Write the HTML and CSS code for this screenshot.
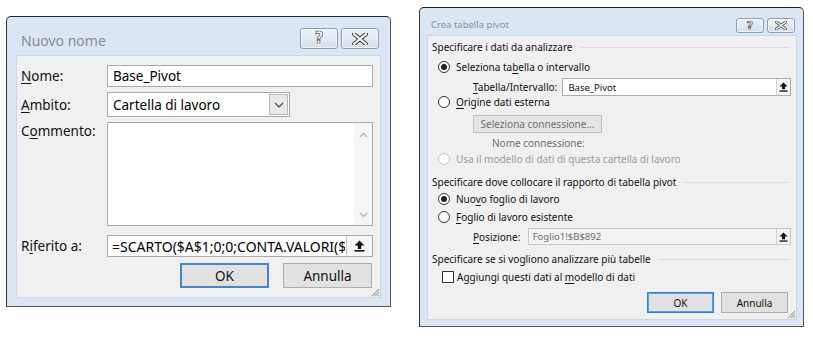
FILE: index.html
```html
<!DOCTYPE html>
<html>
<head>
<meta charset="utf-8">
<link rel="stylesheet" href="styles.css">
</head>
<body>
<div class="page">
  <div class="win win-a">
    <div class="titlebar tb-a">
      <span class="title title-a">Nuovo nome</span>
      <div class="tbtns">
        <span class="tbtn tbtn-a"><span class="qmark qmark-a">?</span></span>
        <span class="tbtn tbtn-a">
          <svg width="16" height="12" viewBox="0 0 16 12"><path d="M2 1 L14 11 M14 1 L2 11" stroke="#444" stroke-width="4.2" stroke-linecap="square"/><path d="M2 1 L14 11 M14 1 L2 11" stroke="#fff" stroke-width="2" stroke-linecap="square"/></svg>
        </span>
      </div>
    </div>
    <div class="client client-a">
      <div class="arow arow-nome">
        <span class="alabel"><u>N</u>ome:</span>
        <div class="abox abox-full">Base_Pivot</div>
      </div>
      <div class="arow arow-ambito">
        <span class="alabel"><u>A</u>mbito:</span>
        <div class="abox combo">
          <span class="combo-text">Cartella di lavoro</span>
          <span class="combo-btn"><svg width="10" height="6" viewBox="0 0 10 6"><path d="M1 1 L5 5 L9 1" fill="none" stroke="#444" stroke-width="1.2"/></svg></span>
        </div>
      </div>
      <div class="arow arow-comm">
        <span class="alabel alabel-top">C<u>o</u>mmento:</span>
        <div class="abox memo">
          <div class="memo-text"></div>
          <div class="memo-scroll">
            <svg width="9" height="6" viewBox="0 0 9 6"><path d="M1 5 L4.5 1.5 L8 5" fill="none" stroke="#b4b4b4" stroke-width="1.3"/></svg>
            <svg width="9" height="6" viewBox="0 0 9 6"><path d="M1 1 L4.5 4.5 L8 1" fill="none" stroke="#b4b4b4" stroke-width="1.3"/></svg>
          </div>
        </div>
      </div>
      <div class="arow arow-rif">
        <span class="alabel">R<u>i</u>ferito a:</span>
        <div class="abox abox-full refbox">
          <span class="ref-text">=SCARTO($A$1;0;0;CONTA.VALORI($A</span>
          <span class="ref-btn ref-btn-a"><svg width="11" height="12" viewBox="0 0 11 12"><path d="M5.5 0.5 L10.5 5.5 L7.2 5.5 L7.2 9 L3.8 9 L3.8 5.5 L0.5 5.5 Z" fill="#111"/><rect x="0.5" y="10" width="10" height="1.6" fill="#111"/></svg></span>
        </div>
      </div>
      <div class="arow arow-btns">
        <span class="abtn abtn-def">OK</span>
        <span class="abtn">Annulla</span>
      </div>
      <svg class="grip" width="10" height="10" viewBox="0 0 10 10"><path d="M9 2 L2 9 M9 5 L5 9 M9 8 L8 9" stroke="#a8a8a8" stroke-width="1.2"/></svg>
    </div>
  </div>

  <div class="win win-b">
    <div class="titlebar tb-b">
      <span class="title title-b">Crea tabella pivot</span>
      <div class="tbtns tbtns-b">
        <span class="tbtn tbtn-b"><span class="qmark qmark-b">?</span></span>
        <span class="tbtn tbtn-b">
          <svg width="12" height="9" viewBox="0 0 12 9"><path d="M1.5 1 L10.5 8 M10.5 1 L1.5 8" stroke="#555" stroke-width="3" stroke-linecap="square"/><path d="M1.5 1 L10.5 8 M10.5 1 L1.5 8" stroke="#fff" stroke-width="1.3" stroke-linecap="square"/></svg>
        </span>
      </div>
    </div>
    <div class="client client-b">
      <div class="brow head h1"><span>Specificare i dati da analizzare</span><span class="rule"></span></div>
      <div class="brow opt r1"><span class="radio on"></span><span>Seleziona ta<u>b</u>ella o intervallo</span></div>
      <div class="brow sub tab">
        <span class="blabel blabel-tab"><u>T</u>abella/Intervallo:</span>
        <div class="bbox bbox-tab"><span class="bbox-text">Base_Pivot</span><span class="ref-btn ref-btn-b"><svg width="9" height="10" viewBox="0 0 9 10"><path d="M4.5 0.5 L8.5 4.5 L6 4.5 L6 7.3 L3 7.3 L3 4.5 L0.5 4.5 Z" fill="#111"/><rect x="0.5" y="8.4" width="8" height="1.3" fill="#111"/></svg></span></div>
      </div>
      <div class="brow opt r2"><span class="radio"></span><span><u>O</u>rigine dati esterna</span></div>
      <div class="brow sub btnrow"><span class="conn-btn">Seleziona connessione...</span></div>
      <div class="brow nomeconn">Nome connessione:</div>
      <div class="brow opt r3 dis"><span class="radio radio-dis"></span><span>Usa il modello di dati di questa cartella di lavoro</span></div>
      <div class="brow head h2"><span>Specificare dove collocare il rapporto di tabella pivot</span><span class="rule"></span></div>
      <div class="brow opt r4"><span class="radio on"></span><span>Nuo<u>v</u>o foglio di lavoro</span></div>
      <div class="brow opt r5"><span class="radio"></span><span><u>F</u>oglio di lavoro esistente</span></div>
      <div class="brow sub pos">
        <span class="blabel blabel-pos"><u>P</u>osizione:</span>
        <div class="bbox bbox-pos"><span class="bbox-text">Foglio1!$B$892</span><span class="ref-btn ref-btn-b"><svg width="9" height="10" viewBox="0 0 9 10"><path d="M4.5 0.5 L8.5 4.5 L6 4.5 L6 7.3 L3 7.3 L3 4.5 L0.5 4.5 Z" fill="#111"/><rect x="0.5" y="8.4" width="8" height="1.3" fill="#111"/></svg></span></div>
      </div>
      <div class="brow head h3"><span>Specificare se si vogliono analizzare più tabelle</span><span class="rule"></span></div>
      <div class="brow chk"><span class="checkbox"></span><span>Aggiungi questi dati al <u>m</u>odello di dati</span></div>
      <div class="brow bbtns">
        <span class="bbtn bbtn-def">OK</span>
        <span class="bbtn">Annulla</span>
      </div>
      <svg class="grip grip-b" width="10" height="10" viewBox="0 0 10 10"><path d="M9 2 L2 9 M9 5 L5 9 M9 8 L8 9" stroke="#a8a8a8" stroke-width="1.2"/></svg>
    </div>
  </div>
</div>
</body>
</html>
```

FILE: styles.css
```css
* { box-sizing: border-box; }
html, body { margin: 0; padding: 0; background: #fff; }
body { font-family: "Noto Sans", "Open Sans", sans-serif; color: #000; }
u { text-decoration-thickness: 1px; text-underline-offset: 2px; }

.page { display: flex; align-items: flex-start; padding-left: 6px; width: 813px; height: 339px; }

.win {
  width: 385px;
  background: #dbe6f4;
  border: 1px solid #555;
  border-top-color: #222;
  border-left-color: #333;
  border-radius: 5px 5px 0 0;
  display: flex;
  flex-direction: column;
}
.win-a { margin-top: 16px; height: 291px; padding: 0 9px 8px 9px; }
.win-b { margin-top: 7px; margin-left: 28px; height: 320px; padding: 0 6px 6px 7px; }

.titlebar { display: flex; align-items: center; justify-content: space-between; }
.tb-a { height: 38px; padding: 0 2px 0 5px; }
.tb-b { height: 27px; padding: 0 2px 0 4px; }
.title { color: #8c8c8c; }
.title-a { font-size: 14px; margin-top: 8px; }
.title-b { font-size: 9.5px; margin-top: 5px; color: #8e8e8e; }

.tbtns { display: flex; gap: 3px; }
.tbtns-b { gap: 3px; margin-top: 8px; }
.tbtn {
  display: flex; align-items: center; justify-content: center;
  border: 1px solid #8d9db3;
  border-radius: 3px;
  background: linear-gradient(#edf2f9, #d4dfec);
  box-shadow: inset 0 0 0 1px rgba(255,255,255,0.6);
}
.tbtn-a { width: 38px; height: 21px; margin-top: 5px; }
.tbtn-b { width: 28px; height: 15px; }
.qmark { font-family: "DejaVu Sans", sans-serif; font-weight: bold; color: #fff; -webkit-text-stroke: 0.7px #555; line-height: 1; }
.qmark-a { font-size: 15px; }
.qmark-b { font-size: 11px; }

.client {
  background: #f0f0f0;
  border: 1px solid #cdd7e3;
  flex: 1;
  position: relative;
  display: flex;
  flex-direction: column;
}

/* left dialog */
.client-a { padding: 9px 0 0 4px; font-size: 13.5px; }
.arow { display: flex; align-items: center; }
.alabel { width: 86px; color: #111; }
.alabel-top { align-self: flex-start; margin-top: 0; }
.abox { background: #fff; border: 1px solid #a9a9a9; height: 22px; display: flex; align-items: center; padding-left: 5px; color: #000; }
.abox-full { width: 266px; }
.arow-ambito { margin-top: 5px; }
.combo { width: 183px; height: 25px; padding-left: 5px; justify-content: space-between; padding-right: 1px; }
.combo-btn { width: 19px; height: 21px; border: 1px solid #b9b9b9; background: #e8e8e8; display: flex; align-items: center; justify-content: center; }
.arow-comm { margin-top: 5px; }
.memo { width: 266px; height: 104px; padding: 0; align-items: stretch; }
.memo-text { flex: 1; }
.memo-scroll { width: 18px; background: #f6f6f6; display: flex; flex-direction: column; justify-content: space-between; align-items: center; padding: 9px 0 7px; }
.arow-rif { margin-top: 9px; }
.refbox { padding-left: 4px; padding-right: 0; overflow: hidden; justify-content: space-between; }
.ref-text { white-space: nowrap; overflow: hidden; width: 233px; font-size: 14px; }
.ref-btn { display: flex; align-items: center; justify-content: center; background: #f7f7f7; border-left: 1px solid #c8c8c8; }
.ref-btn-a { width: 26px; height: 20px; }
.arow-btns { margin-top: 6px; padding-left: 159px; gap: 14px; }
.abtn { width: 89px; height: 25px; border: 1px solid #adadad; background: #e1e1e1; display: flex; align-items: center; justify-content: center; color: #111; }
.abtn-def { border: 2px solid #3c87d6; }
.grip { position: absolute; right: 0; bottom: 0; }

/* right dialog */
.client-b { padding: 2px 5px 0 0; font-size: 10px; color: #111; }
.brow { display: flex; align-items: center; white-space: nowrap; }
.head { height: 18px; padding-left: 4px; }
.rule { flex: 1; height: 1px; background: #dcdcdc; margin-left: 8px; margin-right: 2px; }
.opt { height: 16px; padding-left: 10px; gap: 6px; }
.radio { width: 12px; height: 12px; border-radius: 50%; border: 1px solid #333; background: #fff; display: inline-flex; align-items: center; justify-content: center; flex: none; }
.radio.on::after { content: ""; width: 6px; height: 6px; border-radius: 50%; background: #222; }
.radio-dis { border-color: #c4c4c4; }
.dis { color: #9a9a9a; }
.r1 { margin-top: 2px; height: 18px; }
.sub { padding-left: 45px; }
.tab { margin-top: 2px; height: 18px; }
.blabel { color: #111; }
.blabel-tab { width: 90px; }
.blabel-pos { width: 55px; }
.bbox { height: 18px; background: #fff; border: 1px solid #adadad; display: flex; align-items: center; justify-content: space-between; padding-left: 5px; }
.bbox-tab { width: 230px; }
.bbox-pos { width: 265px; height: 17px; background: #f3f3f3; border-color: #c9c9c9; color: #6d6d6d; padding-left: 4px; }
.bbox-text { font-size: 9.5px; }
.ref-btn-b { width: 14px; height: 16px; background: #f4f4f4; border-left: 1px solid #d0d0d0; }
.bbox-pos .ref-btn-b { height: 15px; }
.r2 { height: 12px; }
.btnrow { margin-top: 7px; height: 18px; }
.conn-btn { width: 129px; height: 18px; border: 1px solid #bfbfbf; background: #e4e4e4; color: #707070; display: flex; align-items: center; justify-content: center; }
.nomeconn { margin-top: 2px; height: 16px; padding-left: 64px; color: #6d6d6d; }
.h2 { margin-top: 6px; }
.r5 { margin-top: 2px; }
.pos { margin-top: 3px; height: 17px; }
.h3 { margin-top: 5px; }
.chk { margin-top: 1px; height: 16px; padding-left: 14px; gap: 3px; }
.checkbox { width: 12px; height: 12px; border: 1px solid #333; background: #fff; flex: none; }
.bbtns { margin-top: 7px; height: 21px; justify-content: flex-end; gap: 7px; padding-right: 3px; }
.bbtn { width: 67px; height: 21px; border: 1px solid #adadad; background: #e1e1e1; display: flex; align-items: center; justify-content: center; color: #111; }
.bbtn-def { border: 1px solid #2f7fd0; box-shadow: inset 0 0 0 1px #5aa0e6; }
```
